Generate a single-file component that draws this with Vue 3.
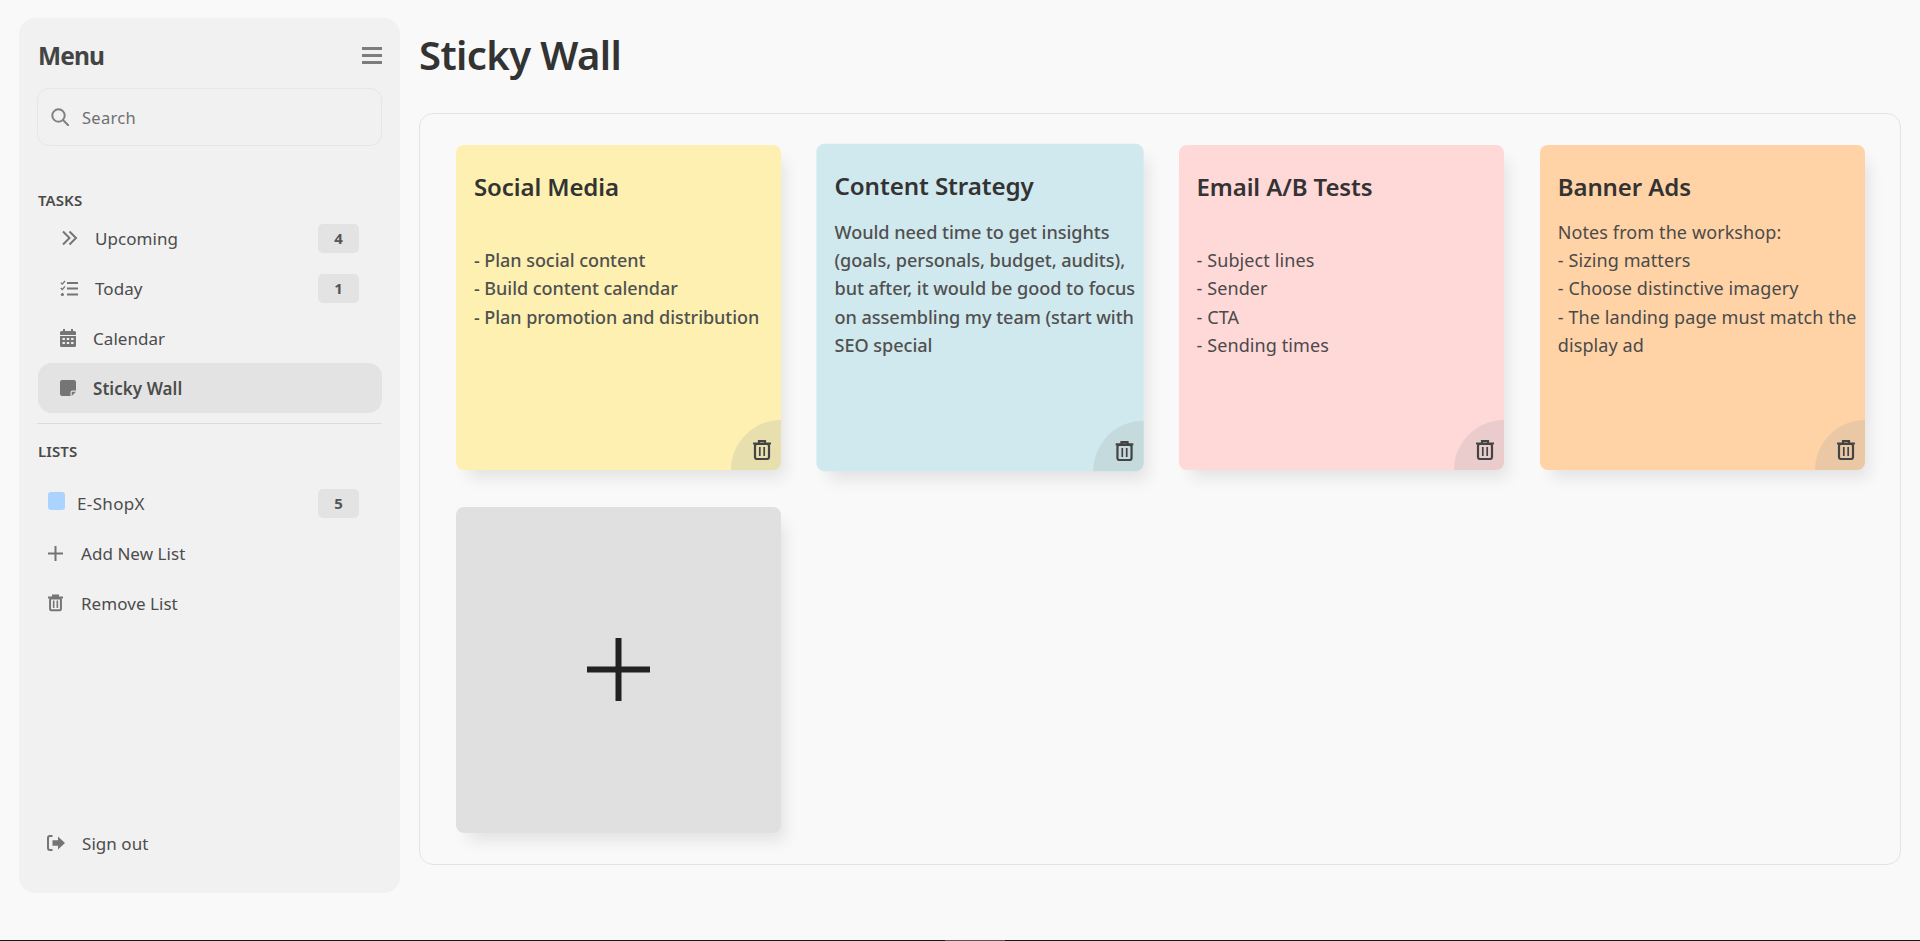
<script setup>
const notes = [
  { title: 'Social Media', body: '\n- Plan social content\n- Build content calendar\n- Plan promotion and distribution', color: '#fdf0b1', cls: 'medium' },
  { title: 'Content Strategy', body: 'Would need time to get insights (goals, personals, budget, audits), but after, it would be good to focus on assembling my team (start with SEO special', color: '#d0e9ee', cls: 'medium hovered' },
  { title: 'Email A/B Tests', body: '\n- Subject lines\n- Sender\n- CTA\n- Sending times', color: '#ffd8d8', cls: '' },
  { title: 'Banner Ads', body: 'Notes from the workshop:\n- Sizing matters\n- Choose distinctive imagery\n- The landing page must match the display ad', color: '#ffd3a6', cls: '' }
];
</script>

<template>
  <div class="page">
    <aside class="sidebar">
      <div class="menu-head">
        <h2>Menu</h2>
        <div class="burger"><i></i><i></i><i></i></div>
      </div>
      <div class="search">
        <svg width="18" height="18" viewBox="0 0 18 18" fill="none" stroke="#808080" stroke-width="2">
          <circle cx="7.500" cy="7.500" r="6.200" />
          <path d="M12 12l5.200 5.200" stroke-linecap="round" />
        </svg>
        <span>Search</span>
      </div>

      <h4 class="section tasks">TASKS</h4>
      <div class="row task">
        <svg class="ico" width="18" height="16" viewBox="0 0 18 16" fill="none" stroke="#757575" stroke-width="2">
          <path d="M3 1.500l6.500 6.500-6.500 6.500M9.500 1.500l6.500 6.500-6.500 6.500" />
        </svg>
        <span class="label far">Upcoming</span>
        <b class="badge">4</b>
      </div>
      <div class="row task">
        <svg class="ico" width="18" height="17" viewBox="0 0 18 17" fill="none" stroke="#757575" stroke-width="2">
          <path d="M.8 2.600l1.500 1.500L5 1M.8 8l1.500 1.500L5 6.400" stroke-width="1.300" />
          <path d="M7 3h11M7 8.500h11M7 14.500h11" />
          <circle cx="2.400" cy="14.500" r="1.600" fill="#757575" stroke="none" />
        </svg>
        <span class="label far">Today</span>
        <b class="badge">1</b>
      </div>
      <div class="row task">
        <svg class="ico" width="16" height="18" viewBox="0 0 16 18">
          <path fill="#757575" d="M3 0h2v2h6V0h2v2h1.500A1.500 1.500 0 0 1 16 3.500V6H0V3.500A1.500 1.500 0 0 1 1.500 2H3zM0 7h16v9.500a1.500 1.500 0 0 1-1.500 1.500h-13A1.500 1.500 0 0 1 0 16.500z" />
          <path fill="#f1f1f1" d="M2.500 9h2.400v2H2.500zM6.800 9h2.400v2H6.800zM11.100 9h2.400v2h-2.400zM2.500 13h2.400v2H2.500zM6.800 13h2.400v2H6.800zM11.100 13h2.400v2h-2.400z" />
        </svg>
        <span class="label">Calendar</span>
      </div>
      <div class="row task active">
        <svg class="ico" width="16" height="16" viewBox="0 0 16 16">
          <path fill="#757575" d="M2 0h12a2 2 0 0 1 2 2v8.500h-3.500a2 2 0 0 0-2 2V16H2a2 2 0 0 1-2-2V2a2 2 0 0 1 2-2zM11.700 16v-3.500a.8.800 0 0 1 .8-.8H16z" />
        </svg>
        <span class="label">Sticky Wall</span>
      </div>
      <hr class="divider" />

      <h4 class="section">LISTS</h4>
      <div class="row list first">
        <span class="swatch"></span>
        <span class="label">E-ShopX</span>
        <b class="badge">5</b>
      </div>
      <div class="row list">
        <svg class="ico" width="15" height="15" viewBox="0 0 15 15" stroke="#757575" stroke-width="2">
          <path d="M7.500 0v15M0 7.500h15" />
        </svg>
        <span class="label">Add New List</span>
      </div>
      <div class="row list">
        <svg class="ico" width="15" height="18" viewBox="0 0 18 20" fill="none" stroke="#757575" stroke-width="2.400">
          <path d="M0 3.500h18M6 3V1h6v2" />
          <rect x="2.500" y="4.500" width="13" height="14.300" rx="1.500" />
          <path d="M6.800 7v9M11.200 7v9" stroke-width="1.900" />
        </svg>
        <span class="label">Remove List</span>
      </div>

      <div class="row signout">
        <svg class="ico" width="18" height="16" viewBox="0 0 18 16">
          <path d="M5.500 1H3a2 2 0 0 0-2 2v10a2 2 0 0 0 2 2h2.500" fill="none" stroke="#757575" stroke-width="2" />
          <path fill="#757575" d="M11 1.500L18 8l-7 6.500v-3.700H5.500V5.200H11z" />
        </svg>
        <span class="label">Sign out</span>
      </div>
    </aside>

    <main class="main">
      <h1>Sticky Wall</h1>
      <section class="wall">
        <article
          v-for="note in notes"
          :key="note.title"
          class="note"
          :class="note.cls"
          :style="{ backgroundColor: note.color }"
        >
          <h3>{{ note.title }}</h3>
          <p>{{ note.body }}</p>
          <div class="corner">
            <svg width="18" height="20" viewBox="0 0 18 20" fill="none" stroke="#444" stroke-width="2.200">
              <path d="M0 3.500h18M6 3V1h6v2" />
              <rect x="2" y="4" width="14" height="15" rx="2" />
              <path d="M6.800 7v9M11.200 7v9" stroke-width="1.700" />
            </svg>
          </div>
        </article>
        <article class="note add">
          <svg width="63" height="63" viewBox="0 0 63 63" stroke="#222" stroke-width="6">
            <path d="M31.500 0v63M0 31.500h63" />
          </svg>
        </article>
      </section>
    </main>
    <div class="taskbar"><i></i></div>
  </div>
</template>

<style scoped>
.page {
  display: flex;
  gap: 19px;
  height: 941px;
  box-sizing: border-box;
  padding: 18px 19px 0;
  background: #f9f9f9;
  color: #444;
  font-family: 'Noto Sans', sans-serif;
  overflow: hidden;
}
.sidebar {
  display: flex;
  flex-direction: column;
  flex: 0 0 381px;
  box-sizing: border-box;
  height: 875px;
  padding: 0 18px 25px 19px;
  background: #f1f1f1;
  border-radius: 16px;
}
.menu-head {
  display: flex;
  align-items: center;
  justify-content: space-between;
  height: 34px;
  margin-top: 20px;
}
.menu-head h2 {
  margin: 0;
  font-size: 24.500px;
  font-weight: 700;
  letter-spacing: -0.9px;
  color: #444;
}
.burger {
  display: flex;
  flex-direction: column;
  gap: 4px;
  width: 20px;
}
.burger i {
  display: block;
  height: 3px;
  background: #7d7d7d;
}
.search {
  display: flex;
  align-items: center;
  gap: 13px;
  height: 58px;
  margin: 16px 0 0 -1px;
  padding-left: 13px;
  box-sizing: border-box;
  border: 1px solid #e6e6e6;
  border-radius: 12px;
  font-size: 16.500px;
  letter-spacing: 0.3px;
  color: #707070;
}
.section {
  margin: 0;
  font-size: 15px;
  font-weight: 600;
  line-height: 20px;
  letter-spacing: 0.1px;
  color: #4a4a4a;
}
.tasks {
  margin-top: 44px;
  margin-bottom: 3px;
}
.row {
  display: flex;
  align-items: center;
  flex: 0 0 50px;
  height: 50px;
  font-size: 17px;
  color: #4c4c4c;
}
.task {
  padding-left: 22px;
}
.list {
  padding-left: 10px;
}
.ico {
  flex: none;
}
.label {
  letter-spacing: 0.05px;
}
.task .label {
  margin-left: 17px;
}
.list .label {
  margin-left: 18px;
}
.list.first {
  margin-top: 17px;
}
.list.first .label {
  margin-left: 12px;
  letter-spacing: 0.35px;
}
.badge {
  margin-left: auto;
  margin-right: 23px;
  width: 41px;
  height: 29px;
  border-radius: 5px;
  background: #e3e3e3;
  font-size: 15px;
  font-weight: 700;
  line-height: 28px;
  text-align: center;
  color: #555;
}
.active {
  border-radius: 14px;
  background: #e3e3e3;
}
.active .label {
  font-weight: 600;
}
.swatch {
  width: 17px;
  height: 18px;
  margin-top: -4px;
  border-radius: 3px;
  background: #aad4ff;
}
.divider {
  width: 100%;
  margin: 10px 0 0 -1px;
  border: 0;
  border-top: 1px solid #dcdcdc;
}
.divider + .section {
  margin-top: 17px;
}
.signout {
  margin-top: auto;
  padding-left: 9px;
}
.signout .label {
  margin-left: 17px;
}
.main {
  flex: 1;
  min-width: 0;
}
.main h1 {
  margin: 9px 0 0 0;
  height: 66px;
  font-size: 40px;
  font-weight: 600;
  line-height: 56px;
  letter-spacing: -0.6px;
  color: #333;
}
.wall {
  display: grid;
  grid-template-columns: repeat(4, 1fr);
  column-gap: 36px;
  row-gap: 37px;
  height: 752px;
  margin-top: 20px;
  box-sizing: border-box;
  padding: 31px 35px 32px 36px;
  border: 1px solid #e4e4e4;
  border-radius: 14px;
  align-content: start;
}
.note {
  position: relative;
  aspect-ratio: 1;
  box-sizing: border-box;
  padding: 25px 3px 0 18px;
  border-radius: 8px;
  box-shadow: 8px 12px 16px -4px rgba(0, 0, 0, 0.09);
}
.note.hovered {
  transform: translateX(0.5px) scale(1.007);
}
.note h3 {
  margin: 0;
  font-size: 24px;
  font-weight: 600;
  line-height: 34px;
  letter-spacing: -0.1px;
  color: #333;
}
.note p {
  margin: 14px 0 0;
  font-size: 18px;
  line-height: 28.200px;
  white-space: pre-line;
  letter-spacing: 0.1px;
  color: #4a4a4a;
}
.note.medium p {
  font-weight: 500;
  letter-spacing: -0.05px;
  color: #505050;
}
.corner {
  position: absolute;
  right: 0;
  bottom: 0;
  display: flex;
  align-items: flex-end;
  justify-content: flex-end;
  box-sizing: border-box;
  width: 50px;
  height: 50px;
  padding: 0 10px 10px 0;
  border-radius: 50px 0 8px 0;
  background: rgba(160, 165, 165, 0.22);
}
.add {
  display: flex;
  align-items: center;
  justify-content: center;
  padding: 0;
  background: #e0e0e0;
}
.taskbar {
  position: fixed;
  left: 0;
  right: 0;
  bottom: 0;
  height: 1px;
  background: #101820;
}
.taskbar i {
  display: block;
  width: 60px;
  height: 1px;
  margin-left: 945px;
  background: #555;
}
</style>

<style>
html,
body {
  margin: 0;
  background: #f9f9f9;
}
</style>
